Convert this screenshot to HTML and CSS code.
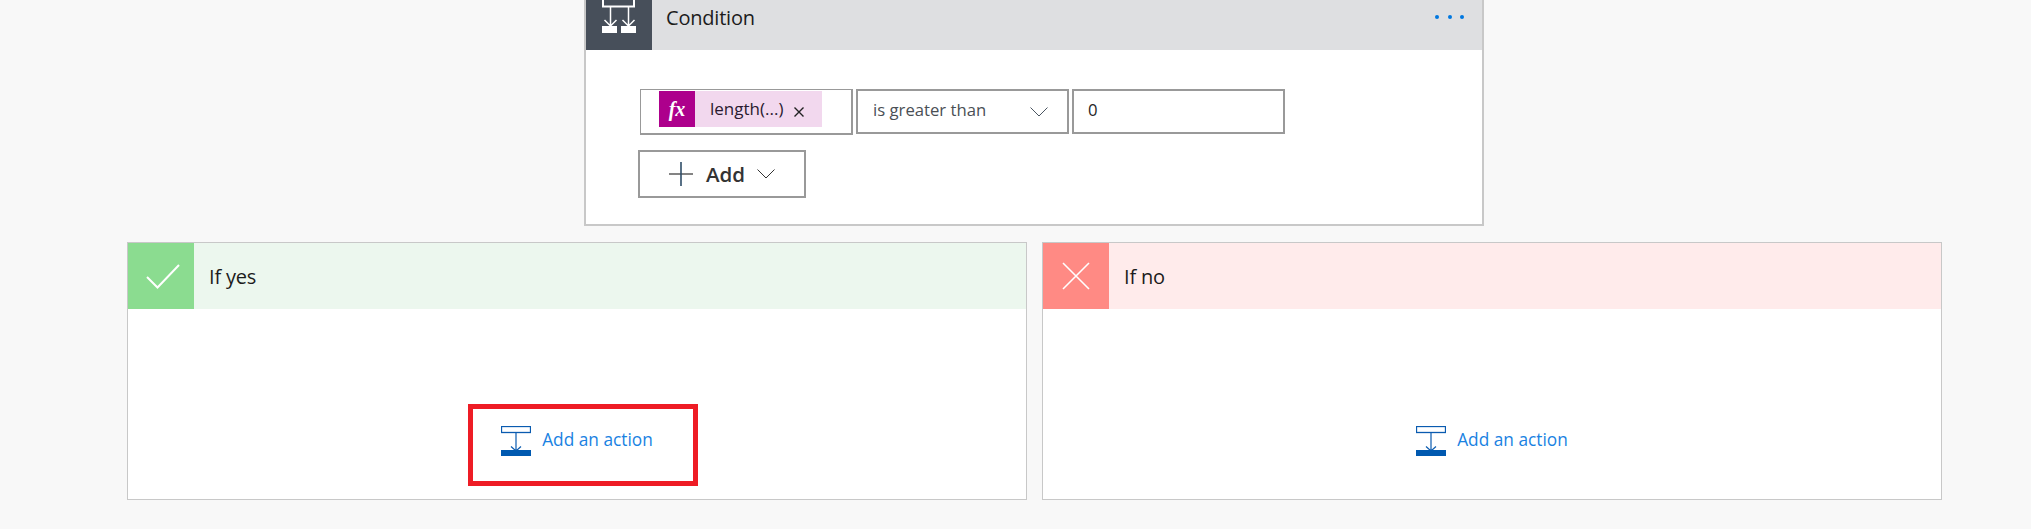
FILE: index.html
```html
<!DOCTYPE html>
<html lang="en">
<head>
<meta charset="utf-8">
<title>Condition</title>
<link rel="stylesheet" href="styles.css">
</head>
<body>
<main class="flow">
  <section class="card condition">
    <header class="head head-grey">
      <div class="tile tile-dark">
        <svg width="66" height="66" viewBox="0 0 66 66" fill="none">
          <rect x="17" y="-8" width="31" height="30.500" stroke="#fff" stroke-width="2"/>
          <path d="M24.500 23v19M42.500 23v19M18.500 36l6 6 6-6M36.500 36l6 6 6-6" stroke="#fff" stroke-width="1.500"/>
          <rect x="16" y="42" width="15" height="7" fill="#fff"/>
          <rect x="35" y="42" width="15" height="7" fill="#fff"/>
        </svg>
      </div>
      <span class="title">Condition</span>
      <span class="dots"><i></i><i></i><i></i></span>
    </header>
    <div class="cond-body">
      <div class="fields">
        <div class="field field-chip">
          <div class="chip">
            <span class="fx">fx</span>
            <span class="chip-text">length(...)</span>
            <svg class="chip-x" width="10" height="10" viewBox="0 0 10 10"><path d="M0.500 0.500l9 9M9.500 0.500l-9 9" stroke="#222" stroke-width="1.400"/></svg>
          </div>
        </div>
        <div class="field field-select">
          <span>is greater than</span>
          <svg class="select-chevron" width="18" height="10" viewBox="0 0 18 10" fill="none"><path d="M0.500 0.500L9 9l8.500-8.500" stroke="#4a5560" stroke-width="1"/></svg>
        </div>
        <div class="field field-value"><span>0</span></div>
      </div>
      <button class="add-btn" type="button">
        <svg width="24" height="24" viewBox="0 0 24 24" fill="none"><path d="M0 12h24" stroke="#333" stroke-width="1.200"/><path d="M12 0v24" stroke="#2f4d68" stroke-width="1.600"/></svg>
        <span>Add</span>
        <svg width="18" height="10" viewBox="0 0 18 10" fill="none"><path d="M0.500 0.500L9 9l8.500-8.500" stroke="#333" stroke-width="1"/></svg>
      </button>
    </div>
  </section>
  <div class="branches">
    <section class="card branch">
      <header class="head head-yes">
        <div class="tile tile-yes">
          <svg width="66" height="66" viewBox="0 0 66 66" fill="none"><path d="M19 34l10.500 10.500L51 22" stroke="#fff" stroke-width="2"/></svg>
        </div>
        <span class="title">If yes</span>
      </header>
      <div class="branch-body">
        <a class="action" href="#">
          <svg width="30" height="30" viewBox="0 0 30 30" fill="none"><rect x="0.500" y="0.500" width="29" height="6" stroke="#0a5bb0" stroke-width="1.300"/><path d="M15 7v18M10 20.500l5 4.500 5-4.500" stroke="#0a5bb0" stroke-width="1.200"/><rect y="24" width="30" height="6" fill="#0059b0"/></svg>
          <span>Add an action</span>
        </a>
        <div class="highlight"></div>
      </div>
    </section>
    <section class="card branch">
      <header class="head head-no">
        <div class="tile tile-no">
          <svg width="66" height="66" viewBox="0 0 66 66" fill="none"><path d="M20 20l26 26M46 20L20 46" stroke="#fff" stroke-width="1.600"/></svg>
        </div>
        <span class="title">If no</span>
      </header>
      <div class="branch-body">
        <a class="action" href="#">
          <svg width="30" height="30" viewBox="0 0 30 30" fill="none"><rect x="0.500" y="0.500" width="29" height="6" stroke="#0a5bb0" stroke-width="1.300"/><path d="M15 7v18M10 20.500l5 4.500 5-4.500" stroke="#0a5bb0" stroke-width="1.200"/><rect y="24" width="30" height="6" fill="#0059b0"/></svg>
          <span>Add an action</span>
        </a>
      </div>
    </section>
  </div>
</main>
</body>
</html>
```
FILE: styles.css
```css
* { box-sizing: border-box; }
html, body { margin: 0; height: 100%; }
body {
  background: #f8f8f8;
  font-family: "Open Sans", "Noto Sans", "Liberation Sans", sans-serif;
  color: #252525;
  overflow: hidden;
}
.flow { display: flex; flex-direction: column; margin-top: -16px; }
.card { background: #fff; border: 1px solid #c8c8c8; }
.head { display: flex; align-items: center; height: 66px; }
.head-grey { background: #dedfe1; }
.head-yes { background: #ecf7ee; }
.head-no { background: #ffebeb; }
.tile { width: 66px; height: 66px; flex: none; overflow: hidden; }
.tile svg { display: block; }
.tile-dark { background: #474f5a; }
.tile-yes { background: #8bdc90; }
.tile-no { background: #ff8a84; }
.title { margin-left: 14px; font-size: 20px; letter-spacing: -0.200px; color: #1c1c1c; }
.branch .title { margin-left: 15px; }

.condition { width: 900px; height: 242px; margin-left: 584px; border-width: 2px; border-top-width: 1px; }
.condition .head { margin-top: -1px; }
.dots { margin-left: auto; margin-right: 18px; display: flex; gap: 8.500px; }
.dots i { width: 4px; height: 4px; border-radius: 50%; background: #0078e0; display: block; }
.cond-body { padding: 39px 0 0 52px; }
.fields { display: flex; gap: 3px; margin-left: 2px; align-items: flex-start; }
.field { width: 213px; height: 45px; border: 2px solid #999; background: #fff; display: flex; align-items: center; font-size: 16.700px; padding-bottom: 4px; }
.field-chip { height: 46px; border-width: 1px 2px 2px 1px; padding: 1px 0 0 18px; align-items: flex-start; }
.chip { display: flex; align-items: center; width: 163px; height: 36px; background: #f2d8ee; }
.fx { width: 36px; height: 36px; background: #ad008c; color: #fff; font-family: "Liberation Serif", serif; font-style: italic; font-weight: bold; font-size: 20px; display: flex; align-items: center; justify-content: center; }
.chip-text { margin-left: 15px; color: #2a1a30; font-size: 17px; padding-bottom: 1px; }
.chip-x { margin: 6px 0 0 11px; }
.field-select { padding: 0 19px 4px 15px; justify-content: space-between; color: #4a4f55; }
.select-chevron { margin-top: 5px; }
.field-value { padding-left: 14px; color: #252525; }
.add-btn { display: flex; align-items: center; width: 168px; height: 48px; margin-top: 15px; padding: 0 0 0 29px; border: 2px solid #999; background: #fff; font: inherit; font-size: 20.500px; font-weight: 600; color: #333; }
.add-btn span { margin: 0 12px 0 13px; }

.branches { display: flex; gap: 15px; margin: 16px 0 0 127px; }
.branch { width: 900px; height: 258px; position: relative; }
.branch-body { height: 190px; display: flex; align-items: flex-end; justify-content: center; padding: 0 0 43px 0; }
.action { display: flex; align-items: center; gap: 11px; text-decoration: none; color: #1a82e2; font-size: 17.300px; }
.action span { padding-bottom: 4px; }
.action svg { display: block; }
.highlight { position: absolute; left: 340px; top: 161px; width: 230px; height: 82px; border: 5px solid #ee1c25; }
```
